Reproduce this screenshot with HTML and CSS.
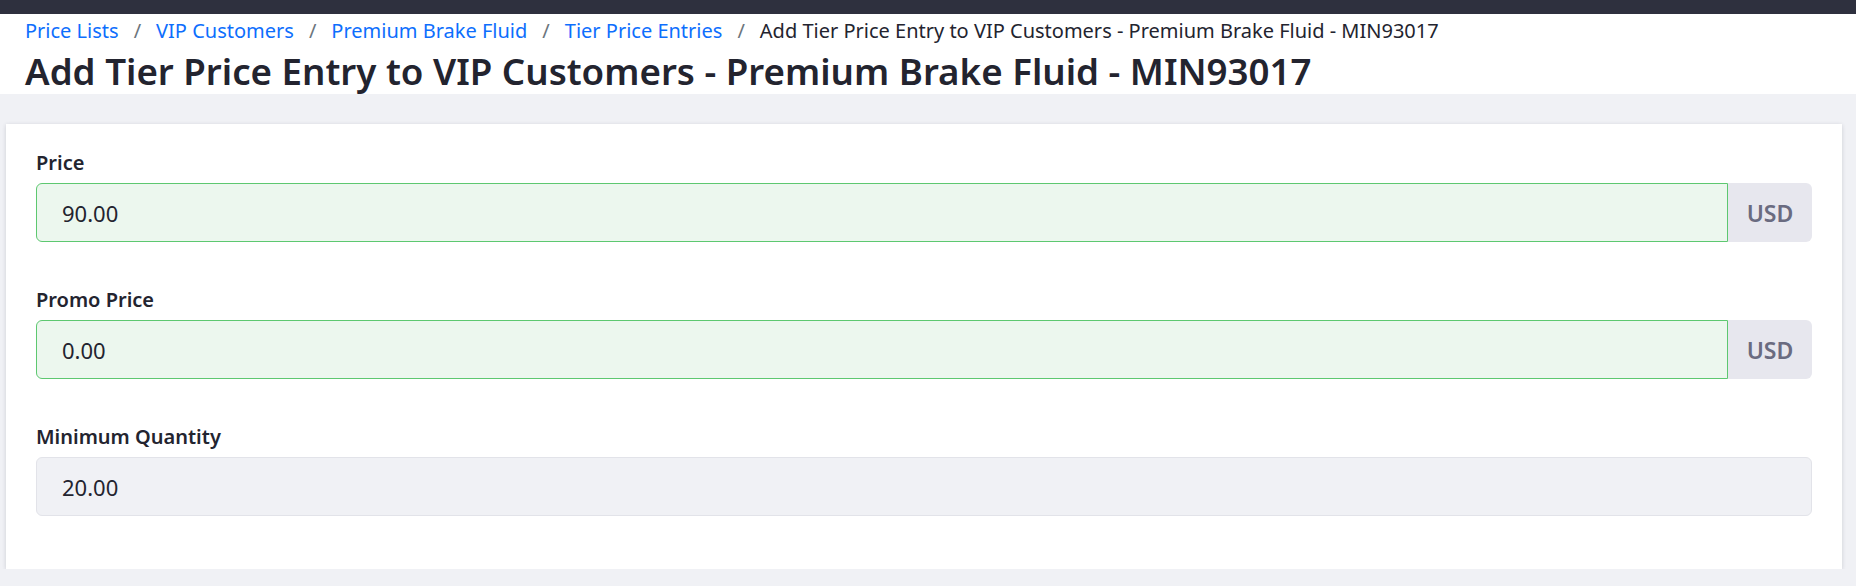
FILE: index.html
```html
<!DOCTYPE html>
<html lang="en">
<head>
<meta charset="utf-8">
<title>Add Tier Price Entry</title>
<link rel="stylesheet" href="styles.css">
</head>
<body>
<div class="topbar"></div>
<header class="page-header">
  <nav class="breadcrumb">
    <a class="crumb link" href="#">Price Lists</a><span class="sep">/</span>
    <a class="crumb link" href="#">VIP Customers</a><span class="sep">/</span>
    <a class="crumb link" href="#">Premium Brake Fluid</a><span class="sep">/</span>
    <a class="crumb link" href="#">Tier Price Entries</a><span class="sep">/</span>
    <span class="crumb current">Add Tier Price Entry to VIP Customers - Premium Brake Fluid - MIN93017</span>
  </nav>
  <h1 class="title">Add Tier Price Entry to VIP Customers - Premium Brake Fluid - MIN93017</h1>
</header>
<main class="main">
  <section class="card">
    <div class="field">
      <label class="label">Price</label>
      <div class="input-group">
        <div class="input valid">90.00</div>
        <div class="addon">USD</div>
      </div>
    </div>
    <div class="field">
      <label class="label">Promo Price</label>
      <div class="input-group">
        <div class="input valid">0.00</div>
        <div class="addon">USD</div>
      </div>
    </div>
    <div class="field last">
      <label class="label">Minimum Quantity</label>
      <div class="input disabled">20.00</div>
    </div>
  </section>
</main>
</body>
</html>
```

FILE: styles.css
```css
* { box-sizing: border-box; }
html, body { margin: 0; padding: 0; }
body {
  background: #f0f1f5;
  font-family: "Noto Sans", "Open Sans", sans-serif;
  color: #23242f;
}
.topbar {
  height: 14px;
  background: #2e303e;
}
.page-header {
  background: #ffffff;
  padding: 3px 25px 1px;
  height: 80px;
}
.breadcrumb {
  display: flex;
  align-items: baseline;
  font-size: 20px;
  line-height: 28px;
  white-space: nowrap;
}
.crumb { text-decoration: none; }
.link { color: #0d6efd; }
.current { color: #23242f; }
.sep {
  color: #6c757d;
  margin: 0 15px;
}
.title {
  margin: 4px 0 0;
  font-size: 36.7px;
  line-height: 44px;
  font-weight: 600;
  color: #23242f;
  white-space: nowrap;
}
.main {
  padding: 30px 14px 0 6px;
}
.card {
  background: #ffffff;
  padding: 26px 30px 23px;
  box-shadow: 0 1px 4px rgba(40, 44, 60, 0.18);
}
.field { margin-bottom: 45px; }
.field.last { margin-bottom: 30px; }
.label {
  display: block;
  font-size: 20px;
  line-height: 25px;
  font-weight: 600;
  margin-bottom: 8px;
  color: #23242f;
}
.input-group {
  display: flex;
  height: 59px;
}
.input {
  flex: 1;
  height: 59px;
  display: flex;
  align-items: center;
  padding: 0 25px;
  font-size: 22px;
  color: #23242f;
  border-radius: 6px;
}
.input.valid {
  background: #ecf7ee;
  border: 1px solid #5dc870;
  border-radius: 6px 0 0 6px;
}
.input.disabled {
  background: #f0f1f5;
  border: 1px solid #e2e3e9;
}
.addon {
  width: 84px;
  display: flex;
  align-items: center;
  justify-content: center;
  background: #e7e7ee;
  color: #6a6b80;
  font-size: 23px;
  font-weight: 600;
  border-radius: 0 6px 6px 0;
}
```
